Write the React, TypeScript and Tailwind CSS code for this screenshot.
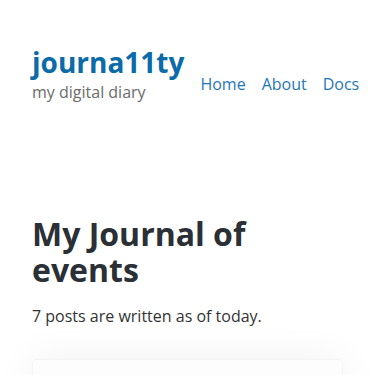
export default function App() {
  return (
    <div className="min-h-[375px] bg-white font-['Open_Sans',sans-serif] overflow-hidden">
      <header className="flex items-end gap-4 px-8 pt-[44px]">
        <div className="flex flex-col">
          <a className="text-[28px] font-bold leading-[36px] text-[#0b6aa8]">journa11ty</a>
          <span className="text-[16px] leading-[24px] text-[#6b6b6b]">my digital diary</span>
        </div>
        <nav className="flex gap-4 pb-[9px] text-[16px] leading-[22px] text-[#1f76b8]">
          <a>Home</a>
          <a>About</a>
          <a>Docs</a>
        </nav>
      </header>
      <main className="px-8 pt-[112px]">
        <h1 className="text-[32px] font-bold leading-[36px] text-[#2b2f36]">My Journal of events</h1>
        <p className="mt-[16px] text-[16px] leading-[24px] text-[#333333]">7 posts are written as of today.</p>
        <div className="mt-[31px] h-[120px] rounded-sm border border-[#f3f4f6] bg-[#fdfdfe] shadow-[0_0_40px_rgba(0,0,0,0.06)]"></div>
      </main>
    </div>
  );
}
